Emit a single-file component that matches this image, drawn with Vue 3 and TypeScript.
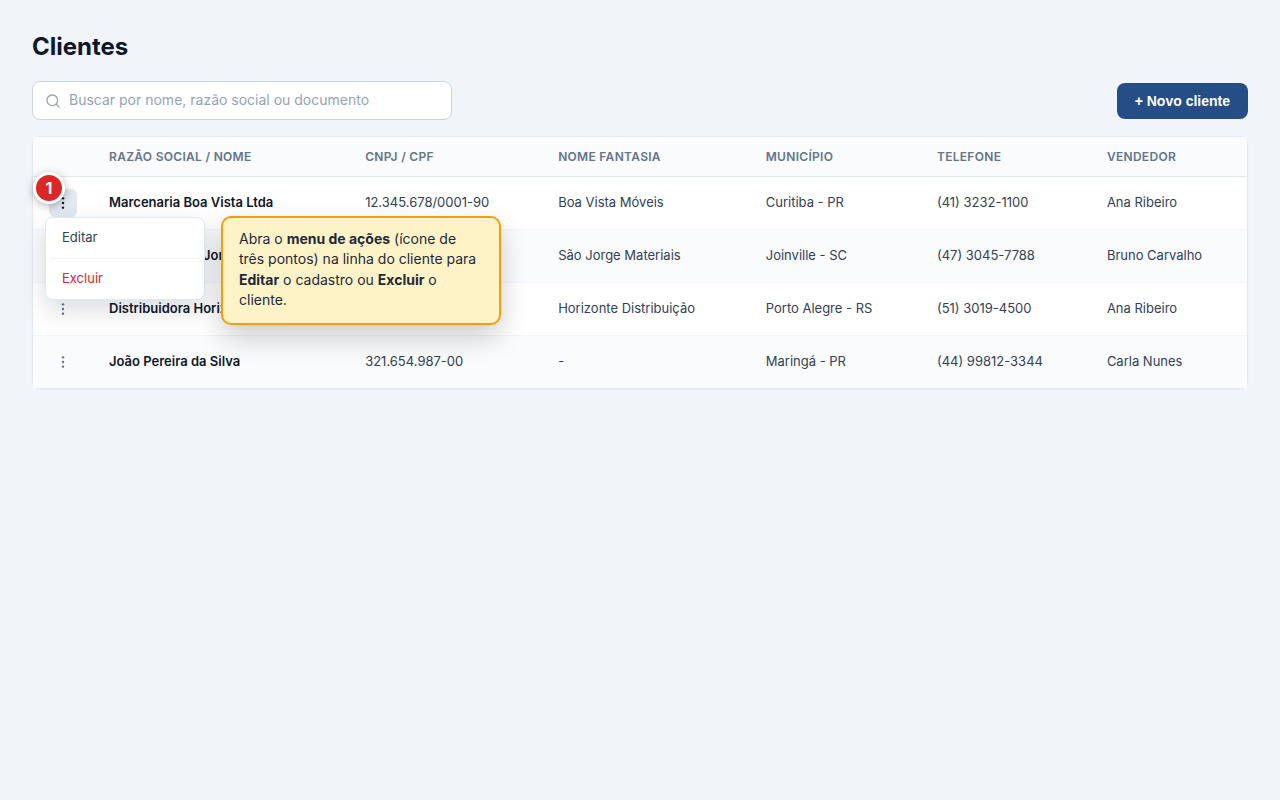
<script setup lang="ts">
import { ref } from 'vue'

interface Client {
  id: number
  name: string
  document: string
  tradeName: string
  city: string
  phone: string
  seller: string
}

const clients: Client[] = [
  { id: 1, name: 'Marcenaria Boa Vista Ltda', document: '12.345.678/0001-90', tradeName: 'Boa Vista Móveis', city: 'Curitiba - PR', phone: '(41) 3232-1100', seller: 'Ana Ribeiro' },
  { id: 2, name: 'Comercial São Jorge', document: '98.765.432/0001-10', tradeName: 'São Jorge Materiais', city: 'Joinville - SC', phone: '(47) 3045-7788', seller: 'Bruno Carvalho' },
  { id: 3, name: 'Distribuidora Horizonte', document: '45.678.912/0001-55', tradeName: 'Horizonte Distribuição', city: 'Porto Alegre - RS', phone: '(51) 3019-4500', seller: 'Ana Ribeiro' },
  { id: 4, name: 'João Pereira da Silva', document: '321.654.987-00', tradeName: '-', city: 'Maringá - PR', phone: '(44) 99812-3344', seller: 'Carla Nunes' },
]

const search = ref('')
const openId = ref<number | null>(1)

function toggle(id: number) {
  openId.value = openId.value === id ? null : id
}
</script>

<template>
  <main class="page">
    <h1>Clientes</h1>
    <div class="toolbar">
      <label class="search">
        <svg width="16" height="16" viewBox="0 0 24 24" fill="none" stroke="currentColor" stroke-width="2" stroke-linecap="round" aria-hidden="true">
          <circle cx="11" cy="11" r="8" />
          <path d="m21 21-4.3-4.3" />
        </svg>
        <input v-model="search" type="text" aria-label="Buscar clientes" placeholder="Buscar por nome, razão social ou documento" />
      </label>
      <button class="primary" type="button">+ Novo cliente</button>
    </div>

    <div class="card">
      <table>
        <colgroup>
          <col class="c-actions" />
          <col class="c-name" />
          <col class="c-document" />
          <col class="c-trade" />
          <col class="c-city" />
          <col class="c-phone" />
          <col class="c-seller" />
        </colgroup>
        <thead>
          <tr>
            <th aria-label="Ações"></th>
            <th>Razão social / Nome</th>
            <th>CNPJ / CPF</th>
            <th>Nome fantasia</th>
            <th>Município</th>
            <th>Telefone</th>
            <th>Vendedor</th>
          </tr>
        </thead>
        <tbody>
          <tr v-for="client in clients" :key="client.id">
            <td class="actions">
              <div class="anchor">
                <button class="dots" :class="{ open: openId === client.id }" type="button" :aria-label="`Ações de ${client.name}`" :aria-expanded="openId === client.id" @click="toggle(client.id)">
                  <svg width="16" height="16" viewBox="0 0 24 24" fill="currentColor" aria-hidden="true">
                    <circle cx="12" cy="5" r="1.8" />
                    <circle cx="12" cy="12" r="1.8" />
                    <circle cx="12" cy="19" r="1.8" />
                  </svg>
                </button>
                <template v-if="openId === client.id">
                  <span class="step">1</span>
                  <div class="menu">
                    <button type="button">Editar</button>
                    <hr />
                    <button type="button" class="danger">Excluir</button>
                  </div>
                  <div class="tip">
                    Abra o <strong>menu de ações</strong> (ícone de três pontos) na linha do cliente para
                    <strong>Editar</strong> o cadastro ou <strong>Excluir</strong> o cliente.
                  </div>
                </template>
              </div>
            </td>
            <td class="name">{{ client.name }}</td>
            <td>{{ client.document }}</td>
            <td>{{ client.tradeName }}</td>
            <td>{{ client.city }}</td>
            <td>{{ client.phone }}</td>
            <td>{{ client.seller }}</td>
          </tr>
        </tbody>
      </table>
    </div>
  </main>
</template>

<style>
body {
  margin: 0;
  background: #f1f5f9;
}
</style>

<style scoped>
.page {
  box-sizing: border-box;
  padding: 32px;
  font-family: Inter, "Liberation Sans", sans-serif;
  font-size: 14px;
  color: #0f172a;
}
h1 {
  margin: 0 0 20px;
  font-size: 24px;
  line-height: 29px;
  font-weight: 700;
}
.toolbar {
  display: flex;
  align-items: center;
  justify-content: space-between;
  gap: 16px;
  margin-bottom: 16px;
}
.search {
  box-sizing: border-box;
  flex: 0 1 420px;
  display: flex;
  align-items: center;
  gap: 8px;
  padding: 9px 12px;
  background: #fff;
  border: 1px solid #cbd5e1;
  border-radius: 8px;
  color: #94a3b8;
}
.search svg {
  flex: none;
}
.search input {
  flex: 1;
  min-width: 0;
  height: 17px;
  padding: 0 0 2px;
  border: 0;
  outline: 0;
  background: none;
  font: inherit;
  color: #0f172a;
}
.search input::placeholder {
  color: #94a3b8;
  opacity: 1;
}
.primary {
  padding: 10px 18px;
  border: 0;
  border-radius: 8px;
  background: #264e86;
  color: #fff;
  font: 700 14px/16px "Liberation Sans", Arial, sans-serif;
  cursor: pointer;
}
.card {
  border: 1px solid #e2e8f0;
  border-radius: 8px;
  background: #fff;
  box-shadow: 0 1px 2px rgba(15, 23, 42, 0.04);
}
table {
  width: 100%;
  table-layout: fixed;
  border-collapse: separate;
  border-spacing: 0;
}
.c-actions {
  width: 60px;
}
.c-name {
  width: 21.1%;
}
.c-document {
  width: 15.9%;
}
.c-trade {
  width: 17.1%;
}
.c-city {
  width: 14.1%;
}
.c-phone {
  width: 14%;
}
th {
  height: 39px;
  padding: 0 16px;
  border-bottom: 1px solid #e2e8f0;
  background: #f9fbfd;
  color: #64748b;
  font-size: 12px;
  font-weight: 600;
  letter-spacing: 0.025em;
  text-align: left;
  text-transform: uppercase;
  white-space: nowrap;
}
td {
  height: 50px;
  padding: 0 16px 2px;
  border-bottom: 1px solid #f1f5f9;
  color: #334155;
  font-size: 13px;
  white-space: nowrap;
}
tbody tr:nth-child(even) td {
  background: #f9fbfd;
}
tbody tr:last-child td {
  border-bottom: 0;
}
td.actions {
  height: 52px;
  padding-bottom: 0;
}
td.name {
  color: #0f172a;
  font-weight: 600;
}
.anchor {
  position: relative;
  width: 28px;
  height: 28px;
}
.dots {
  display: flex;
  align-items: center;
  justify-content: center;
  width: 28px;
  height: 28px;
  padding: 0;
  border: 0;
  border-radius: 6px;
  background: transparent;
  color: #64748b;
  cursor: pointer;
}
.dots.open {
  background: #e2e8f0;
  color: #0f172a;
}
.step {
  position: absolute;
  z-index: 3;
  top: -17px;
  left: -16px;
  width: 26px;
  height: 26px;
  border: 3px solid #fff;
  border-radius: 50%;
  background: #dc2626;
  color: #fff;
  font-size: 16px;
  line-height: 26px;
  font-weight: 700;
  text-align: center;
  box-shadow: 0 2px 8px rgba(0, 0, 0, 0.3);
}
.menu {
  position: absolute;
  z-index: 1;
  top: 28px;
  left: -4px;
  box-sizing: border-box;
  width: 160px;
  padding: 4px;
  border: 1px solid #e2e8f0;
  border-radius: 8px;
  background: #fff;
  box-shadow: 0 10px 25px rgba(15, 23, 42, 0.15);
}
.menu button {
  display: block;
  width: 100%;
  padding: 7px 12px 9px;
  border: 0;
  background: none;
  color: #334155;
  font: inherit;
  line-height: 16px;
  text-align: left;
  cursor: pointer;
}
.menu hr {
  height: 1px;
  margin: 4px 0;
  border: 0;
  background: #f1f5f9;
}
.menu .danger {
  color: #dc2626;
}
.tip {
  position: absolute;
  z-index: 2;
  top: 27px;
  left: 172px;
  box-sizing: border-box;
  width: 280px;
  padding: 11px 16px 13px;
  border: 2px solid #f59e0b;
  border-radius: 10px;
  background: #fef3c7;
  color: #1e293b;
  font-size: 14px;
  line-height: 1.45;
  white-space: normal;
  box-shadow: 0 12px 28px rgba(0, 0, 0, 0.2);
}
</style>
